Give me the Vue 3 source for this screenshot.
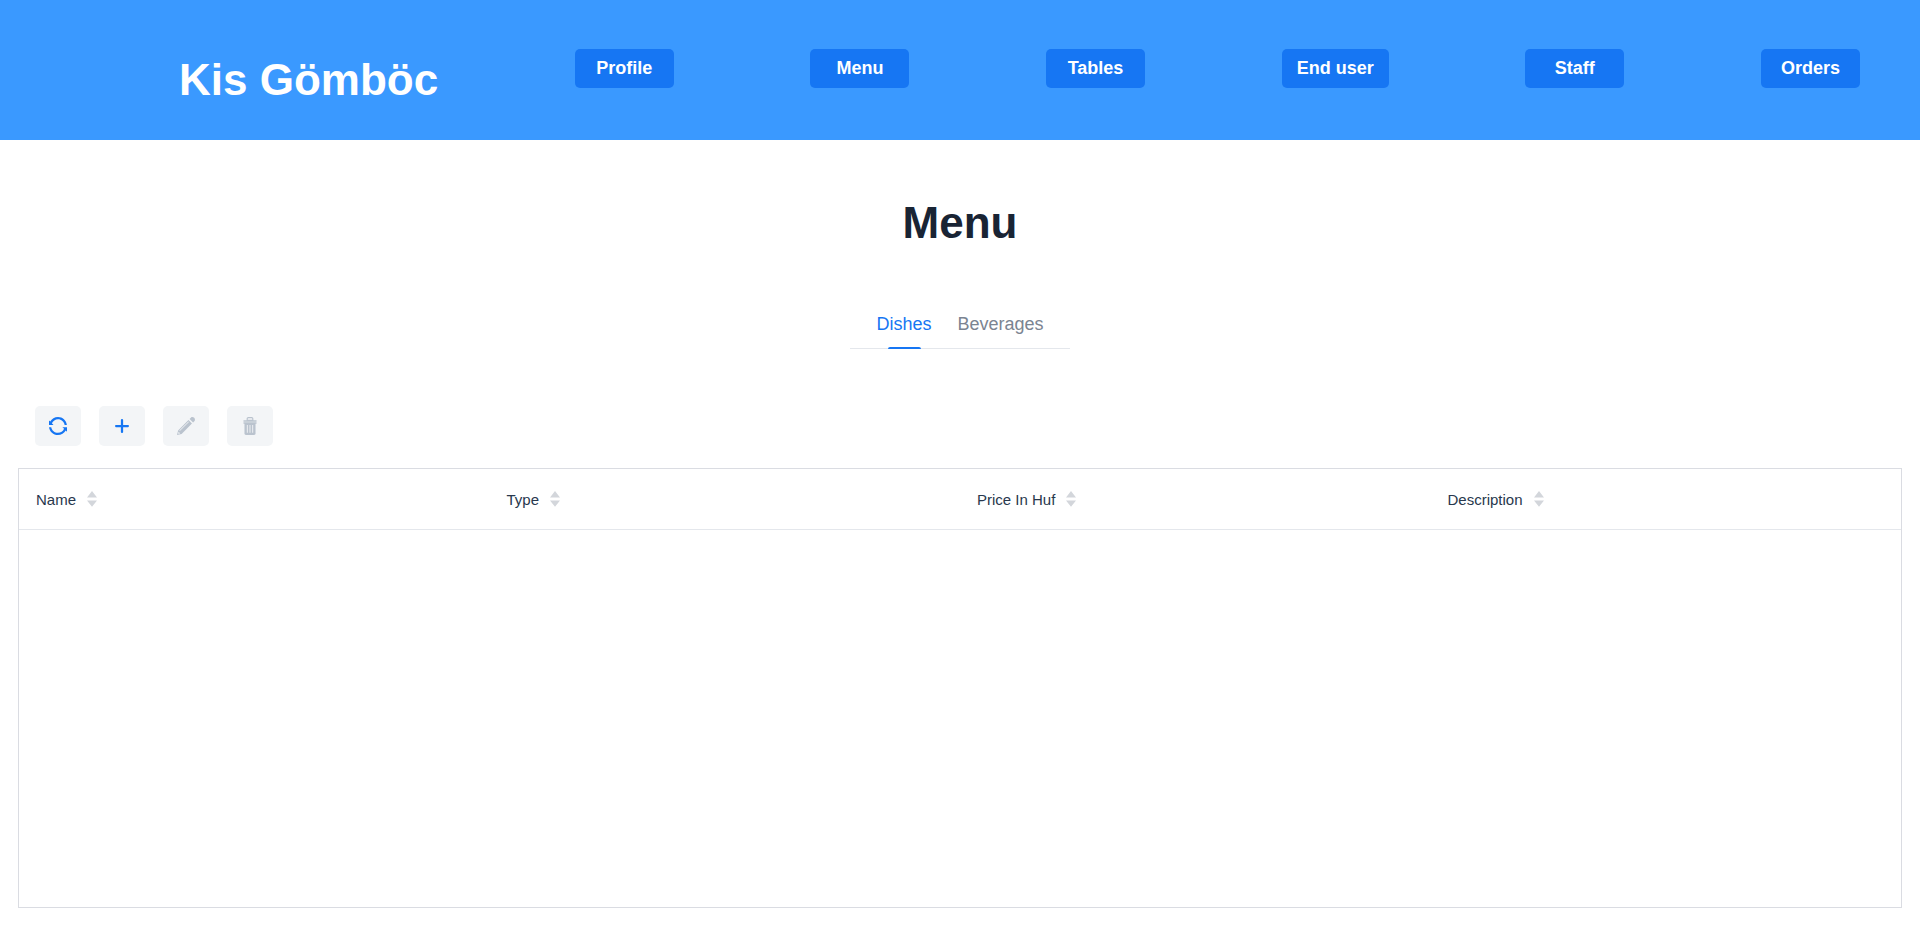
<script setup>
import { ref } from 'vue'

const links = ['Profile', 'Menu', 'Tables', 'End user', 'Staff', 'Orders']
const tabs = ['Dishes', 'Beverages']
const activeTab = ref('Dishes')
const columns = ['Name', 'Type', 'Price In Huf', 'Description']

const actions = [
  {
    label: 'Refresh',
    disabled: false,
    paths: [
      'M2.6 5.6c0.9-2.1 3-3.6 5.4-3.6 3 0 5.4 2.2 5.9 5h2c-0.5-3.9-3.8-7-7.9-7-3 0-5.6 1.6-6.9 4.1l-1.1-1.1v4h4l-1.4-1.4z',
      'M16 9h-4.1l1.5 1.4c-0.9 2.1-3 3.6-5.5 3.6-2.9 0-5.4-2.2-5.9-5h-2c0.5 3.9 3.9 7 7.9 7 3 0 5.6-1.7 7-4.1l1.1 1.1v-4z',
    ],
  },
  {
    label: 'Add',
    disabled: false,
    paths: ['M7 2.6q0-0.8 1-0.8t1 0.8v4.4h4.4q0.8 0 0.8 1t-0.8 1h-4.4v4.4q0 0.8-1 0.8t-1-0.8v-4.4h-4.4q-0.8 0-0.8-1t0.8-1h4.4z'],
  },
  {
    label: 'Edit',
    disabled: true,
    paths: [
      'M1 11.9l-1 4.1 4.1-1 9.2-9.2-3.1-3.1-9.2 9.2zM1.5 15l-0.4-0.5 0.3-1.3 1.3 1.3-1.2 0.5zM10.6 4.4l-8.1 8-0.4-0.4 8.1-8 0.4 0.4z',
      'M15.3 0.7c-1.1-1.1-2.6-0.5-2.6-0.5l-1.5 1.5 3.1 3.1 1.5-1.5c0-0.1 0.6-1.5-0.5-2.6z',
    ],
  },
  {
    label: 'Delete',
    disabled: true,
    paths: [
      'M13.8 2.8h-2.8v-1.3c0-0.8-0.7-1.5-1.5-1.5h-3c-0.8 0-1.5 0.7-1.5 1.5v1.3h-2.8v1.4h11.6zM6 1.5c0-0.3 0.2-0.5 0.5-0.5h3c0.3 0 0.5 0.2 0.5 0.5v1h-4z',
      'M2.2 4.7v1.3h0.9v9q0.4 1 1.6 1h6.6q1.2 0 1.6-1v-9h0.9v-1.3zM6 14h-0.8v-6.8h0.8zM8.4 14h-0.8v-6.8h0.8zM10.8 14h-0.8v-6.8h0.8z',
    ],
  },
]
</script>

<template>
  <div class="page">
    <header class="top">
      <h2 class="brand">Kis Gömböc</h2>
      <button v-for="link in links" :key="link" type="button" class="nav-button">{{ link }}</button>
    </header>

    <main class="content">
      <h1 class="title">Menu</h1>

      <div class="tabs" role="tablist">
        <button
          v-for="tab in tabs"
          :key="tab"
          type="button"
          role="tab"
          class="tab"
          :class="{ active: tab === activeTab }"
          :aria-selected="tab === activeTab"
          @click="activeTab = tab"
        >{{ tab }}</button>
      </div>

      <div class="toolbar">
        <button
          v-for="action in actions"
          :key="action.label"
          type="button"
          class="tool"
          :aria-label="action.label"
          :disabled="action.disabled"
        >
          <svg viewBox="0 0 16 16" width="18" height="18" aria-hidden="true">
            <path v-for="(d, i) in action.paths" :key="i" :d="d" />
          </svg>
        </button>
      </div>

      <div class="grid">
        <table>
          <thead>
            <tr>
              <th v-for="column in columns" :key="column" scope="col">
                <button type="button" class="sorter">
                  {{ column }}
                  <svg viewBox="0 0 10 16" width="10" height="16" aria-hidden="true">
                    <path d="M5 0l5 6.4h-10zM0 9.4h10l-5 6.4z" />
                  </svg>
                </button>
              </th>
            </tr>
          </thead>
          <tbody></tbody>
        </table>
      </div>
    </main>
  </div>
</template>

<style>
body {
  margin: 0;
  background: #fff;
}
</style>

<style scoped>
.page {
  display: flex;
  flex-direction: column;
  box-sizing: border-box;
  min-height: 100vh;
  font-family: "Liberation Sans", Arial, sans-serif;
  font-size: 18px;
  color: #192434;
}

button {
  margin: 0;
  border: 0;
  background: none;
  font: inherit;
  cursor: pointer;
}

.top {
  display: flex;
  justify-content: space-between;
  align-items: flex-start;
  box-sizing: border-box;
  min-height: 140px;
  padding: 49px 60px 0 179px;
  background: #3a99ff;
}

.brand,
.title {
  margin: 0;
  font-size: 44px;
  line-height: 50px;
  font-weight: 700;
}

.brand {
  margin-top: 6px;
  color: #fff;
}

.nav-button {
  min-width: 99px;
  height: 39px;
  padding: 0 15px;
  border-radius: 5px;
  background: #1676f3;
  color: #fff;
  font-weight: 700;
}

.content {
  display: flex;
  flex: 1;
  flex-direction: column;
  align-items: center;
  padding: 58px 18px 17px;
}

.tabs {
  display: flex;
  margin-top: 52px;
  padding: 0 13px;
  box-shadow: inset 0 -1px #e4e7ec;
}

.tab {
  position: relative;
  height: 49px;
  padding: 0 13px;
  color: #7b8491;
}

.tab.active {
  color: #1676f3;
}

.tab.active::after {
  content: "";
  position: absolute;
  bottom: 0;
  left: 50%;
  width: 33px;
  height: 2px;
  margin-left: -16px;
  border-radius: 2px 2px 0 0;
  background: #1676f3;
}

.toolbar {
  display: flex;
  align-self: stretch;
  gap: 18px;
  margin: 57px 17px 22px;
}

.tool {
  display: flex;
  align-items: center;
  justify-content: center;
  width: 46px;
  height: 40px;
  padding: 0;
  border-radius: 5px;
  background: #f3f5f7;
  color: #1676f3;
}

.tool:disabled {
  color: #bac3ce;
  cursor: default;
}

svg {
  fill: currentColor;
}

.grid {
  flex: 1;
  align-self: stretch;
  border: 1px solid #dadce2;
}

table {
  width: 100%;
  border-collapse: separate;
  border-spacing: 0;
  table-layout: fixed;
}

th {
  height: 60px;
  padding: 0 17px;
  border-bottom: 1px solid #e4e7ec;
  text-align: left;
  font-size: 15px;
  font-weight: 400;
}

.sorter {
  display: flex;
  align-items: center;
  gap: 11px;
  padding: 0;
  color: #28384d;
}

.sorter svg {
  color: #d3d6db;
}
</style>
